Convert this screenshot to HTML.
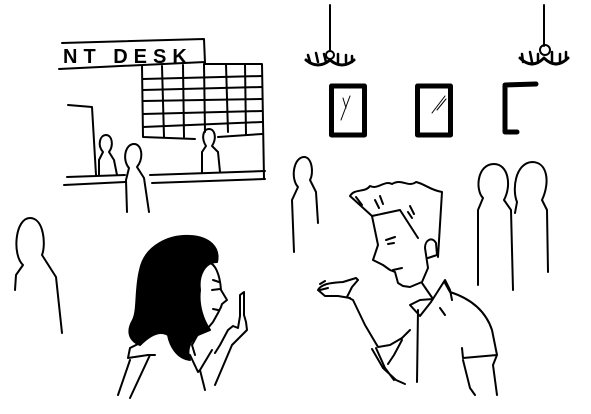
<!DOCTYPE html>
<html><head><style>
html,body{margin:0;padding:0;background:#fff;width:591px;height:414px;overflow:hidden}
svg{display:block}
text{font-family:"Liberation Sans",sans-serif;font-weight:bold}
</style></head><body>
<svg width="591" height="414" viewBox="0 0 591 414" fill="none" stroke="#000" stroke-width="2" stroke-linecap="round" stroke-linejoin="round">
<!-- sign -->
<path d="M62 43 L204 39 L205 63 M59 69 L100 67 L205 62"/>
<text x="63" y="63" font-size="20" fill="#000" stroke="none" letter-spacing="6">NT DESK</text>
<!-- grid -->
<path d="M142 66 L143 137 L195 139 M162 66 L164 137 M183 65 L184 137 M204 64 L205 132 M226 64 L228 132 M245 64 L246 135 M205 64 L262 64 L264 178"/>
<path d="M143 79 L262 76 M143 90 L262 87 M143 101 L262 99 M143 114 L262 111 M143 127 L262 122 M218 137 L262 134"/>
<!-- counter -->
<path d="M68 105 L92 107 L96 175 M67 177 L125 175 M150 175 L265 171 M64 185 L125 182 M152 183 L265 179"/>
<!-- small figures at desk -->
<path d="M99 175 L99 160 L103 152 C97 145 100 135 106 135 C112 135 114 145 109 152 L114 160 L117 175"/>
<path d="M127 212 L126 180 L129 168 C122 160 125 144 134 144 C142 144 144 158 137 167 L144 178 L149 212"/>
<path d="M202 173 L202 152 L206 146 C201 138 203 129 209 129 C215 129 217 138 212 146 L218 152 L220 172"/>
<!-- figures -->
<path d="M15 290 L16 275 L23 265 C12 255 15 218 30 218 C44 218 46 245 42 255 L56 277 L62 333"/>
<path d="M294 252 L292 200 L298 187 C290 178 294 157 304 157 C312 157 314 173 310 180 L316 192 L318 223"/>
<path d="M478 285 L478 210 L483 198 C475 190 477 164 494 164 C508 164 512 185 504 200 L511 210 L513 290"/>
<path d="M517 202 C512 190 515 163 532 162 C548 162 550 183 542 200 L547 210 L548 272 M517 202 L515 213"/>
<!-- chandeliers -->
<path d="M330 5 L330 50 M544 5 L544 46"/>
<path d="M306 60 Q318 70 330 60 Q342 70 354 60" stroke-width="3"/>
<path d="M520 58 Q532 70 544 58 Q556 70 568 58" stroke-width="3"/>
<circle cx="330" cy="55" r="4"/><circle cx="545" cy="50" r="5"/>
<path d="M308 55 L310 62 M316 53 L318 62 M324 54 L326 62 M338 54 L338 62 M346 55 L346 62 M352 56 L352 62" stroke-width="2.5"/>
<path d="M522 54 L523 62 M530 52 L532 62 M538 54 L538 62 M552 52 L552 62 M560 54 L560 62 M566 52 L566 60" stroke-width="2.5"/>
<!-- frames -->
<rect x="331.5" y="86" width="33" height="49" stroke-width="5"/>
<rect x="417.5" y="86" width="33" height="49" stroke-width="5"/>
<path d="M343 98 L346 108 M341 120 L350 96 M432 113 L445 96 M437 110 L446 99" stroke-width="1"/>
<path d="M536 84 L505 85 L505 132 L517 132" stroke-width="5"/>
<!-- woman -->
<path fill="#000" stroke="#000" d="M140 270 C145 245 170 235 190 236 C210 237 220 248 217 262 C205 262 198 275 200 290 C198 305 203 320 210 330 L198 335 C190 340 186 350 190 360 C176 358 170 345 168 335 C160 330 150 335 140 345 C128 340 127 330 133 320 C138 310 135 290 140 270 Z"/>
<path d="M208 263 C215 262 220 275 221 290 L227 300 L222 304 L221 307 L218 313 L213 322 L208 328 C206 330 200 333 196 334 M213 280 L219 282 M212 290 L220 289 M213 309 L218 310"/>
<path d="M198 334 L192 345 L195 355 M140 343 L130 348 L128 358 L148 355 L155 355 M130 360 L118 395 M150 355 L130 398 M190 355 L198 372 L200 370 L212 350 M200 370 L205 390 M215 353 L220 345 L228 330 L233 326 L238 328 L240 316 L240 295 L244 292 L244 315 L246 322 L247 330 L242 335 L232 345 L215 385"/>
<!-- man -->
<path d="M350 196 C355 188 365 193 370 186 C378 190 384 180 392 184 C402 178 408 188 416 182 C425 184 430 190 442 192 L438 257 M350 196 L372 216 L400 210 L418 238 M356 197 L362 205 M375 200 L379 208 M380 196 L383 204 M408 212 L412 218 M410 206 L414 214"/>
<path d="M372 216 L378 245 L373 260 L383 265 L390 270 L395 272 L398 283 L403 286 L410 287 L422 282 L428 268 L425 248 C425 240 432 236 436 243 L437 255 L428 258 M386 240 L395 237 M388 244 L394 243 M393 270 L402 268"/>
<path d="M422 283 L433 299 L420 300 L410 305 L420 316 L431 302 L445 280 L450 290 L452 300 M445 283 L450 292 C475 300 487 315 492 330 L497 355 L463 358 L462 348 M440 308 L445 315 M463 360 L470 388 L475 395 M497 355 L493 365 L497 395 M418 310 L417 382 M410 330 L402 338"/>
<path d="M402 340 L394 355 L388 364 M372 349 L383 368 L396 380 L405 384 M318 290 C322 283 332 283 343 282 L356 278 L358 280 L352 287 L347 297 L353 300 L365 325 L378 347 L390 345 L402 338 M318 290 L325 296 L338 296 L350 298 M320 284 L325 281 M320 290 L328 288 M376 348 L385 368 L394 380"/>
</svg>
</body></html>
